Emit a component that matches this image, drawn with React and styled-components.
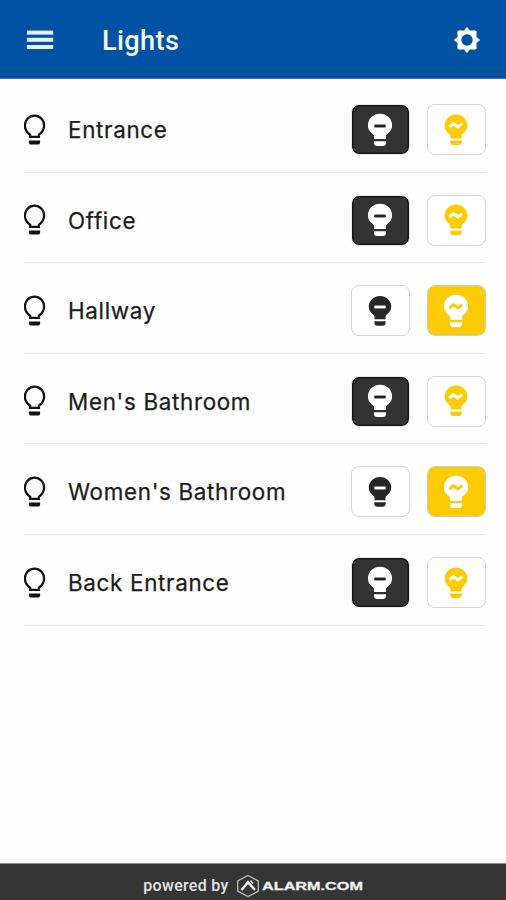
// src/App.jsx
import React from 'react';
import styled, { createGlobalStyle } from 'styled-components';

const GlobalStyle = createGlobalStyle`
  * {
    box-sizing: border-box;
  }

  body {
    margin: 0;
    background-color: #fefefe;
  }
`;

const Screen = styled.div`
  display: flex;
  flex-direction: column;
  height: 900px;
  width: 506px;
  overflow: hidden;
`;

const Header = styled.header`
  display: flex;
  align-items: center;
  height: 79px;
  padding: 2px 25px 0 26px;
  background-color: #0052a3;
  border-bottom: 1px solid #3a74b8;
`;

const IconButton = styled.button`
  display: flex;
  padding: 0;
  border: none;
  background: none;
`;

const Title = styled.h1`
  flex: 1;
  margin: 2px 0 0 48px;
  color: #f4f8ff;
  font-family: Roboto, sans-serif;
  font-size: 27.2px;
  font-weight: 500;
  line-height: 32px;
  letter-spacing: 0.35px;
`;

const LightList = styled.ul`
  flex: 1;
  margin: 0;
  padding: 3px 20.5px 0 23.5px;
  list-style: none;
`;

const LightRow = styled.li`
  display: flex;
  align-items: center;
  height: 90.6px;
  padding-top: 5.5px;
  border-bottom: 1px solid #e9e9e9;
`;

const LightName = styled.span`
  flex: 1;
  margin: 1px 0 0 22.5px;
  color: #1c1c1c;
  font-family: Inter, sans-serif;
  font-size: 22.4px;
  line-height: 28px;
  letter-spacing: 0.68px;
  -webkit-text-stroke: 0.25px #1c1c1c;
`;

const Controls = styled.div`
  display: flex;
  gap: 17px;
`;

const variants = {
  off: { background: '#333333', border: '#e8e8e8', ring: '#141414' },
  on: { background: '#fccb05', border: '#d3cfc0', ring: '#fccb05' },
  idle: { background: '#ffffff', border: '#d6d6d6', ring: '#ffffff' },
};

const LightButton = styled.button`
  display: flex;
  align-items: center;
  justify-content: center;
  width: 59px;
  height: 51px;
  padding: 0;
  border: 1px solid ${({ $variant }) => variants[$variant].border};
  border-radius: 8px;
  background-color: ${({ $variant }) => variants[$variant].background};
  background-clip: padding-box;
  box-shadow: inset 0 0 0 1.5px ${({ $variant }) => variants[$variant].ring};
`;

const Footer = styled.footer`
  display: flex;
  align-items: center;
  justify-content: center;
  gap: 7px;
  height: 37px;
  padding: 7px 0 0 3px;
  border-top: 1px solid #8a8a8a;
  background-color: #353535;
`;

const PoweredBy = styled.span`
  color: #e4e4e4;
  font-family: Roboto, sans-serif;
  font-size: 16px;
  font-weight: 500;
  line-height: 20px;
  letter-spacing: 0.3px;
`;

const MenuIcon = () => (
  <svg width="28" height="22" viewBox="0 0 28 22" fill="#e9eefb">
    <rect x="0.9" y="1.6" width="26.3" height="4" />
    <rect x="0.9" y="8.8" width="26.3" height="4" />
    <rect x="0.9" y="16" width="26.3" height="4" />
  </svg>
);

const GearIcon = () => (
  <svg width="28" height="28" viewBox="-14 -14 28 28">
    <path
      d="M0-12.6 3-9 8.3-9.2 9.2-8.3 9-3 12.6 0 9 3 9.2 8.3 8.3 9.2 3 9 0 12.6-3 9-8.3 9.2-9.2 8.3-9 3-12.6 0-9-3-9.2-8.3-8.3-9.2-3-9Z"
      fill="#fff"
      stroke="#fff"
      strokeWidth="0.8"
      strokeLinejoin="round"
    />
    <circle r="5.7" fill="#0052a3" />
  </svg>
);

const BulbOutline = () => (
  <svg width="22" height="32" viewBox="0.5 0 22 32">
    <path
      d="M6.6 22.9V20.6C3.4 18.4 1.4 15.3 1.4 11.4a9.6 9.8 0 0 1 19.2 0c0 3.9-2 7-5.2 9.2v2.3Z"
      fill="none"
      stroke="#111"
      strokeWidth="2.3"
    />
    <path d="M5.4 26.6h11.2v1.8q0 2.2-2.2 2.2H7.6q-2.2 0-2.2-2.2Z" fill="#111" />
  </svg>
);

const BulbSolid = ({ color, mark, kind, scale = 1 }) => (
  <svg width="26" height="34" viewBox="-13 -17 26 34">
    <g transform={`scale(${scale})`}>
      <path
        d="M-5.6 8.4V5.4C-6.4 3.2-11.4 1.6-11.4-4.3a11.4 11.1 0 0 1 22.8 0c0 5.9-5 7.5-5.8 9.7v3Z"
        fill={color}
      />
      <path d="M-5.7 10.5H5.7v1.6q0 3-3 3h-5.4q-3 0-3-3Z" fill={color} />
    </g>
    {kind === 'off' ? (
      <path d="M-5.7-4H5.7" stroke={mark} strokeWidth="2.9" />
    ) : (
      <path
        d="M-6.6-2.9-2.6-6.3 2-3 6.2-6.5"
        fill="none"
        stroke={mark}
        strokeWidth="2.9"
      />
    )}
  </svg>
);

const AlarmLogo = () => (
  <svg width="130" height="24" viewBox="0 0 130 24">
    <path
      d="M12 1.5 22.3 7v10.2L12 22.6 1.7 17.2V7Z"
      fill="none"
      stroke="#bdbdbd"
      strokeWidth="1.3"
    />
    <path
      d="M5.5 16 12 8.2 19 16"
      fill="none"
      stroke="#f4f4f4"
      strokeWidth="2.4"
    />
    <path d="M14.5 6.5 17 9.5" stroke="#f4f4f4" strokeWidth="1.4" />
    <text
      x="26"
      y="16.2"
      fill="#f0f0f0"
      stroke="#f0f0f0"
      strokeWidth="0.3"
      fontFamily="Liberation Sans, sans-serif"
      fontWeight="700"
      fontSize="11.8"
      textLength="101"
      lengthAdjust="spacingAndGlyphs"
    >
      ALARM.COM
    </text>
  </svg>
);

const lights = [
  { name: 'Entrance', on: false },
  { name: 'Office', on: false },
  { name: 'Hallway', on: true },
  { name: "Men's Bathroom", on: false },
  { name: "Women's Bathroom", on: true },
  { name: 'Back Entrance', on: false },
];

const Light = ({ name, on }) => (
  <LightRow>
    <BulbOutline />
    <LightName>{name}</LightName>
    <Controls>
      <LightButton $variant={on ? 'idle' : 'off'} aria-label="Off">
        <BulbSolid
          kind="off"
          color={on ? '#262626' : '#fff'}
          mark={on ? '#fff' : '#222'}
          scale={on ? 0.98 : 1.06}
        />
      </LightButton>
      <LightButton $variant={on ? 'on' : 'idle'} aria-label="On">
        <BulbSolid
          kind="on"
          color={on ? '#fff' : '#fccb05'}
          mark={on ? '#fccb05' : '#fff'}
          scale={on ? 1.06 : 1}
        />
      </LightButton>
    </Controls>
  </LightRow>
);

const App = () => (
  <Screen>
    <GlobalStyle />
    <Header>
      <IconButton aria-label="Menu">
        <MenuIcon />
      </IconButton>
      <Title>Lights</Title>
      <IconButton aria-label="Settings">
        <GearIcon />
      </IconButton>
    </Header>
    <LightList>
      {lights.map((light) => (
        <Light key={light.name} name={light.name} on={light.on} />
      ))}
    </LightList>
    <Footer>
      <PoweredBy>powered by</PoweredBy>
      <AlarmLogo />
    </Footer>
  </Screen>
);

export default App;
